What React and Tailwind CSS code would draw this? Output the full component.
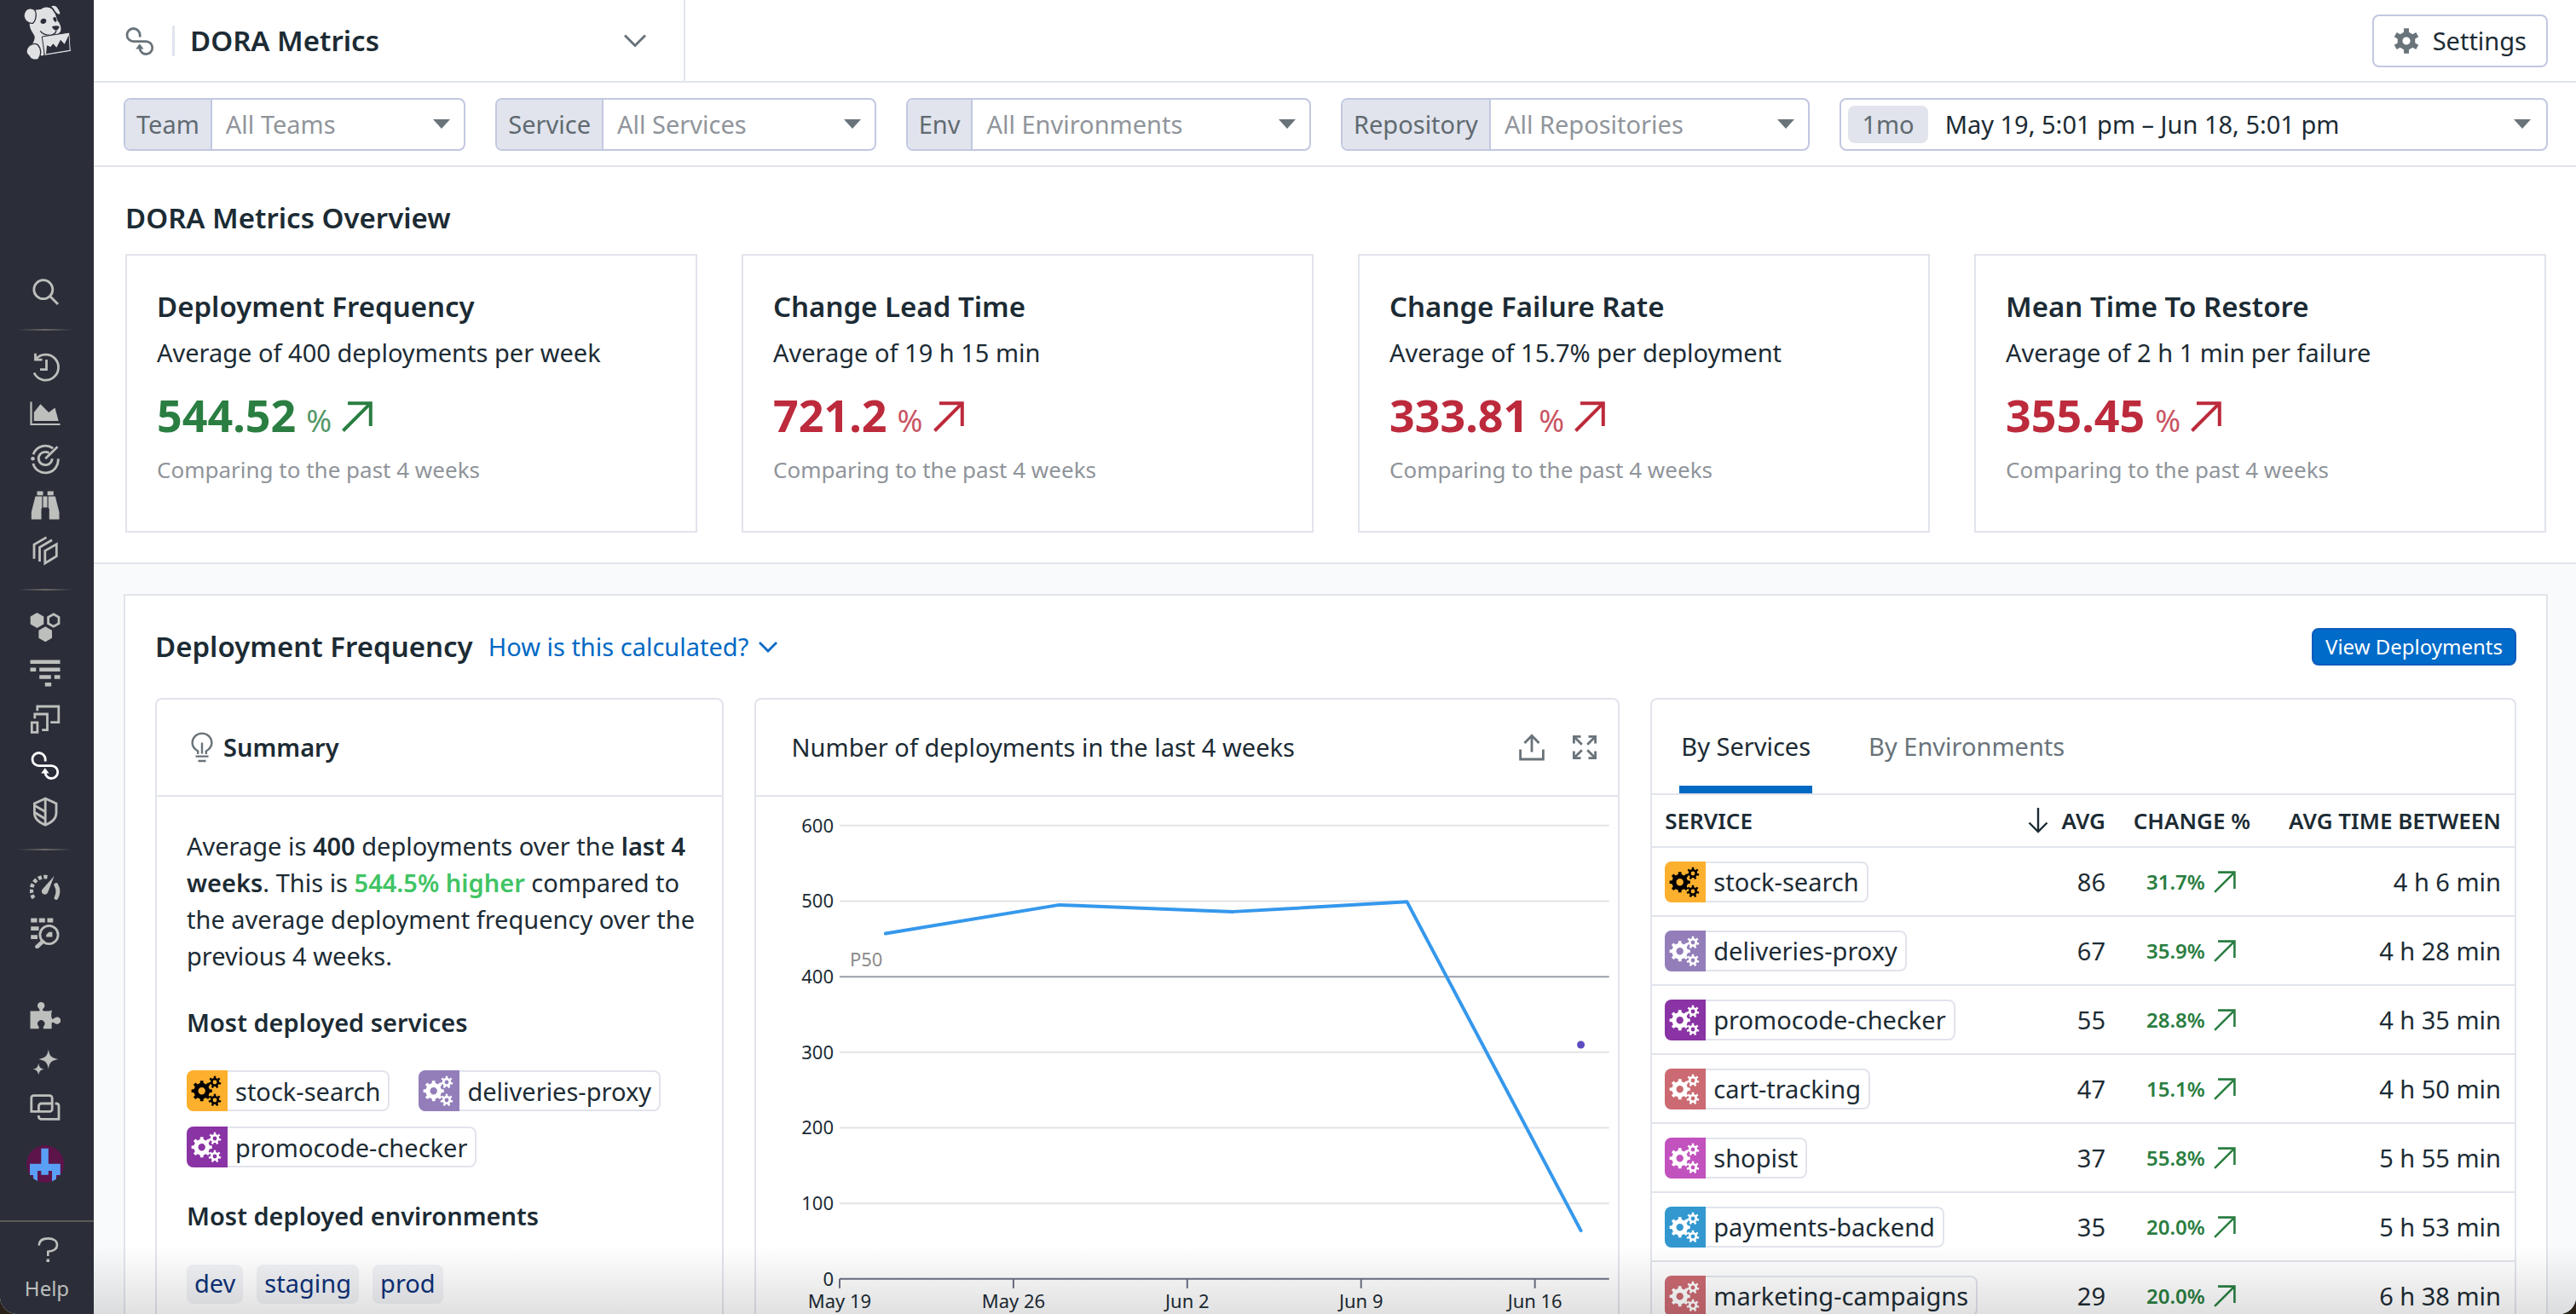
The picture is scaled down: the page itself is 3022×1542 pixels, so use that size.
import { useState } from "react";

const filters = [
  { id: "team", label: "Team", placeholder: "All Teams" },
  { id: "service", label: "Service", placeholder: "All Services" },
  { id: "env", label: "Env", placeholder: "All Environments" },
  { id: "repository", label: "Repository", placeholder: "All Repositories" },
];

const overview = [
  {
    title: "Deployment Frequency",
    subtitle: "Average of 400 deployments per week",
    value: "544.52",
    color: "text-[#2a7e41]",
  },
  {
    title: "Change Lead Time",
    subtitle: "Average of 19 h 15 min",
    value: "721.2",
    color: "text-[#bc2a3c]",
  },
  {
    title: "Change Failure Rate",
    subtitle: "Average of 15.7% per deployment",
    value: "333.81",
    color: "text-[#bc2a3c]",
  },
  {
    title: "Mean Time To Restore",
    subtitle: "Average of 2 h 1 min per failure",
    value: "355.45",
    color: "text-[#bc2a3c]",
  },
];

const services = [
  { name: "stock-search", tone: "bg-[#fdb02d] text-black", avg: 86, change: "31.7%", between: "4 h 6 min" },
  { name: "deliveries-proxy", tone: "bg-[#937eba] text-white", avg: 67, change: "35.9%", between: "4 h 28 min" },
  { name: "promocode-checker", tone: "bg-[#8a33a4] text-white", avg: 55, change: "28.8%", between: "4 h 35 min" },
  { name: "cart-tracking", tone: "bg-[#cb6a72] text-white", avg: 47, change: "15.1%", between: "4 h 50 min" },
  { name: "shopist", tone: "bg-[#c152be] text-white", avg: 37, change: "55.8%", between: "5 h 55 min" },
  { name: "payments-backend", tone: "bg-[#3398cf] text-white", avg: 35, change: "20.0%", between: "5 h 53 min" },
  { name: "marketing-campaigns", tone: "bg-[#cb6a72] text-white", avg: 29, change: "20.0%", between: "6 h 38 min" },
];

// Outline of a gear with its hole, to be filled with the evenodd rule
const gearPath = (cx, cy, body, outer, hole, teeth) => {
  const step = (Math.PI * 2) / teeth;
  const point = (r, a) =>
    `${(cx + r * Math.sin(a)).toFixed(2)} ${(cy - r * Math.cos(a)).toFixed(2)}`;
  let d = "";
  for (let i = 0; i < teeth; i++) {
    const a = i * step;
    d += `${i ? "L" : "M"}${point(body, a - step * 0.27)}L${point(outer, a - step * 0.19)}`;
    d += `L${point(outer, a + step * 0.19)}L${point(body, a + step * 0.27)}`;
  }
  return `${d}ZM${cx - hole} ${cy}a${hole} ${hole} 0 1 0 ${hole * 2} 0a${hole} ${hole} 0 1 0 ${-hole * 2} 0Z`;
};

const GearsIcon = () => (
  <svg viewBox="0 0 48 48" className="size-12" fill="currentColor" fillRule="evenodd">
    <path d={gearPath(17.7, 24.3, 9.4, 12.2, 4.2, 8)} />
    <path d={gearPath(33, 14, 5.2, 7.4, 2.4, 7)} />
    <path d={gearPath(33, 35, 5.2, 7.4, 2.4, 7)} />
  </svg>
);

const LoopIcon = () => (
  <>
    <path d="M18.2 13.5V11A7.6 7.6 0 1 0 10.8 18.7H25.5A7.4 7.4 0 1 1 18 27" />
    <path d="M17.8 21.2 22.6 27.6H13.2Z" fill="currentColor" stroke="none" />
  </>
);

const HEX = "l7.8 4.5v9l-7.8 4.5-7.8-4.5v-9z";

const icons = {
  search: (
    <>
      <circle cx="15.8" cy="15.7" r="11" />
      <path d="m24 24 9 9" />
    </>
  ),
  history: (
    <>
      <path d="M5 24.5A15 15 0 1 0 7 8.5" />
      <path d="M6.5 1.8V9.2H14.5M19.5 9V20.7H12" />
    </>
  ),
  dashboards: (
    <>
      <path d="M1.5 4.5V31H35.5" strokeWidth="2.2" />
      <path d="M4.8 27V17L12.5 7.2 22.2 17 29.5 11.5 33.7 27Z" fill="currentColor" stroke="none" />
    </>
  ),
  monitors: (
    <>
      <path d="M4 12.2A15 15 0 0 1 27.2 5.2M3.8 22.8A15 15 0 0 0 33.2 17.3" />
      <path d="M22.5 10.6A8 7.6 0 1 0 26.2 17.3M18.2 17.3 32.5 3.3" />
      <circle cx="3.5" cy="17.3" r="2.3" fill="currentColor" stroke="none" />
    </>
  ),
  watchdog: (
    <path
      fill="currentColor"
      stroke="none"
      d="M8.5 1.5H15.5V6.2H8.5ZM20.7 1.5H27.8V6.2H20.7ZM6.5 7.5H14.3V21L13.5 22V34.5H1.8V26ZM21.7 7.5H29.8L34.5 26V34.5H22.8V22L21.7 21ZM15.5 7.5H20.5V20.5H15.5Z"
    />
  ),
  catalog: (
    <>
      <path d="M17.8 17.4 31.3 9.6V23.8L17.8 32Z" />
      <path d="M11.5 30V13.4L26 4.8M5 26.7V10L19.5 1.6" />
    </>
  ),
  infrastructure: (
    <>
      <path d={`M8.5 1${HEX}M18.2 17.3${HEX}`} fill="currentColor" stroke="none" />
      <path d="M27.8 2.8l6.2 3.6v7.2l-6.2 3.6-6.2-3.6v-7.2z" />
    </>
  ),
  logs: (
    <path d="M.5 4.8H35.5M.5 13.8H7.2M11.2 13.8H35.5M11.2 22.5H24.8M28.8 22.5H35.5M17.8 31.2H25.2" strokeWidth="4.6" />
  ),
  rum: (
    <path d="M2.3 21.8H8.9V33.3H2.3ZM5.8 17.3V12H20.5V30.7H14.2M8.8 8.3V3H33.8V21.7H24.2" />
  ),
  delivery: <LoopIcon />,
  security: (
    <>
      <path d="M18.2 3 31 9V20C31 26.5 25 31.5 18.2 34.2 11.5 31.5 5.4 26.5 5.4 20V9ZM18.2 3V34" />
      <path d="M6 11.5 18 18.5M6 19.5 18 27" />
    </>
  ),
  metrics: (
    <>
      <path d="M4.5 31A16 16 0 0 1 20.5 6.3" strokeWidth="4.6" strokeDasharray="4.2 2.4" />
      <path d="M28.6 5 21.4 23.6A3.8 3.8 0 1 1 14.8 20.4Z" fill="currentColor" stroke="none" />
      <path d="M30.8 15.5C33.4 20 33.6 25.5 31 30.5" strokeWidth="4.8" strokeLinecap="round" />
    </>
  ),
  logsearch: (
    <>
      <path d="M1.2 3H8.5M10.8 3H17.8M20.5 3H27.3M1.2 12.7H10.5M1.2 22.7H9" strokeWidth="4.8" />
      <circle cx="22.5" cy="20" r="10.6" />
      <path d="M15 28 8.5 34" strokeWidth="4.6" strokeLinecap="round" />
      <path d="M19.2 22.4V20L22.5 16.8H26.4V22.4Z" fill="currentColor" stroke="none" />
    </>
  ),
  integrations: (
    <path
      fill="currentColor"
      stroke="none"
      d="M.5 12.5H9.5C12 12.5 12 10.8 10.6 9.4A4.2 4.2 0 1 1 15.8 9.4C14.4 10.8 14.6 12.5 17 12.5 20 12.8 23 12.4 26 11.4 25 14.5 25 18 25.6 20.6 26 22.4 27.6 22 28.8 20.8A4.2 4.2 0 1 1 28.8 26.4C27.4 25.2 26 25.6 25.6 27V33.3H16.2C15.4 31.8 15.6 31 16.6 30A4.2 4.2 0 1 0 9.9 30C10.8 31 11 31.8 10.4 33.3H.5Z"
    />
  ),
  bits: (
    <path
      fill="currentColor"
      stroke="none"
      d="M21.8 3.6C23 11 25 13.4 33.2 15 25 16.6 23 19 21.8 26.4 20.6 19 18.6 16.6 10.4 15 18.6 13.4 20.6 11 21.8 3.6ZM10.2 19.8C11 24.4 12.4 26 17.2 26.8 12.4 27.6 11 29.2 10.2 33.6 9.4 29.2 8 27.6 3.4 26.8 8 26 9.4 24.4 10.2 19.8Z"
    />
  ),
  support: (
    <>
      <path d="M1.8 22.4V6.4A3 3 0 0 1 4.8 3.6H23.2A3 3 0 0 1 26.2 6.6V19.4A3 3 0 0 1 23.2 22.4Z" />
      <path d="M25.5 13H13.4A3 3 0 0 0 10.4 16V21.5M29.6 13H31.4A3 3 0 0 1 34 15.8V31.4H13.4A3 3 0 0 1 10.4 28.4V27" />
    </>
  ),
  help: (
    <>
      <path d="M8.8 13.6C9 8 13.5 5.4 19.5 5.4 26 5.4 30 8.4 30 13 30 18.6 25 20.2 19.3 20.8V26" strokeWidth="2.6" />
      <path d="M17.5 29.4H21V33H17.5Z" fill="currentColor" stroke="none" />
    </>
  ),
};

const SideIcon = ({ name }) => (
  <svg viewBox="0 0 36 36" className="size-9" fill="none" stroke="currentColor" strokeWidth="2.8">
    {icons[name]}
  </svg>
);

const NavItem = ({ name, active }) => (
  <a
    href="#"
    aria-label={name}
    className={
      active
        ? "flex h-[54px] items-center justify-center text-white"
        : "flex h-[54px] items-center justify-center text-[#bdbfbc]"
    }
  >
    <SideIcon name={name} />
  </a>
);

const NavDivider = () => (
  <div className="flex h-[35px] items-center justify-center">
    <div className="h-0.5 w-16 bg-linear-to-r from-transparent via-[#6a6766] to-transparent" />
  </div>
);

const Logo = () => (
  <svg viewBox="50 15 171 195" className="h-[65px] w-[57px]" fill="#dfe1e3">
    <path d="M76 32C92 40 98 32 113 33 122 24 138 22 152 32L163 48 172 74C182 84 186 100 182 110 176 122 160 122 150 130L120 132 124 194C104 200 84 192 76 170 80 156 92 146 91 128 84 112 72 104 73 78Z" />
    <path d="M147 22C158 14 170 20 176 32 182 42 185 50 178 52 168 52 160 40 156 32Z" stroke="#2b2e39" strokeWidth="4" />
    <path d="M60 36C66 28 84 26 92 36 100 50 94 76 84 82 70 84 56 74 53 58 52 48 55 42 60 36Z" stroke="#2b2e39" strokeWidth="4" />
    <path d="M66 168C72 156 90 150 102 158 114 170 116 194 104 208 92 214 76 210 70 196 60 190 60 178 66 168Z" stroke="#2b2e39" strokeWidth="4" />
    <path d="M115 68C122 62 132 66 132 72 132 80 126 86 118 83 110 82 110 74 115 68Z" fill="#2b2e39" />
    <path d="M158 61C164 58 168 64 168 70 170 78 164 80 160 74 156 70 154 66 158 61Z" fill="#2b2e39" />
    <path d="M152 94C160 90 172 90 178 94 176 102 172 106 166 107 160 106 154 102 152 94Z" fill="#2b2e39" />
    <path d="M111 109C118 120 134 124 148 124 156 123 164 118 167 108" fill="none" stroke="#2b2e39" strokeWidth="4" />
    <path d="M117 129 214 114 219 181 126 196Z" stroke="#2b2e39" strokeWidth="3" />
    <path d="M131 190 134 160 147 165 156 154 168 167 182 140 196 155 211 124 214 176Z" fill="#2b2e39" />
  </svg>
);

const Avatar = () => (
  <svg viewBox="0 0 44 44" className="size-11">
    <clipPath id="avatar">
      <circle cx="22" cy="22" r="22" />
    </clipPath>
    <g clipPath="url(#avatar)">
      <path d="M0 0H44V44H0Z" fill="#5c144b" />
      <path d="M17.3 3.8H25.8V21.8H39.8V35H35V44H30V30H25.8V34.8H17.3V30H13V44H8V35H4V21.8H17.3Z" fill="#5a9ff6" />
    </g>
  </svg>
);

const Sidebar = () => (
  <nav className="flex w-[110px] shrink-0 flex-col bg-[#2b2e39] pr-1">
    <a href="#" aria-label="Home" className="flex justify-center pt-[5px] pl-1">
      <Logo />
    </a>
    <div className="mt-auto pr-px pb-7">
      <NavItem name="search" />
      <NavDivider />
      <NavItem name="history" />
      <NavItem name="dashboards" />
      <NavItem name="monitors" />
      <NavItem name="watchdog" />
      <NavItem name="catalog" />
      <NavDivider />
      <NavItem name="infrastructure" />
      <NavItem name="logs" />
      <NavItem name="rum" />
      <NavItem name="delivery" active />
      <NavItem name="security" />
      <NavDivider />
      <NavItem name="metrics" />
      <NavItem name="logsearch" />
      <div className="h-[43px]" />
      <NavItem name="integrations" />
      <NavItem name="bits" />
      <NavItem name="support" />
      <a href="#" aria-label="Account" className="flex h-[77px] items-center justify-center">
        <Avatar />
      </a>
    </div>
    <a
      href="#"
      className="-mr-1 flex h-[110px] flex-col items-center border-t-2 border-[#5b5a5b] pt-3.5 text-2xl text-[#bdbfbc]"
    >
      <SideIcon name="help" />
      <span className="mt-3">Help</span>
    </a>
  </nav>
);

const Caret = () => (
  <svg viewBox="0 0 20 11" className="h-[11px] w-5 shrink-0" fill="#69737a">
    <path d="M0 0H20L10 11Z" />
  </svg>
);

const Filter = ({ id, label, placeholder }) => (
  <div className="flex h-[62px] min-w-0 overflow-hidden rounded-lg border-2 border-[#c1c8e0] bg-white">
    <label
      htmlFor={id}
      className="flex items-center border-r-2 border-[#c1c8e0] bg-[#e1e4ed] px-[13px] text-[29px] text-[#606a70]"
    >
      {label}
    </label>
    <div className="relative flex min-w-0 flex-1 items-center">
      <select
        id={id}
        className="h-full w-full appearance-none bg-transparent pr-12 pl-4 text-[29px] text-[#90959b] outline-none"
      >
        <option>{placeholder}</option>
      </select>
      <div className="pointer-events-none absolute right-4">
        <Caret />
      </div>
    </div>
  </div>
);

const UpArrow = ({ className, strokeWidth }) => (
  <svg viewBox="0 0 36 36" className={className} fill="none" stroke="currentColor" strokeWidth={strokeWidth}>
    <path d="M7 2.2H33.8V29M33.8 2.2 1.5 34.5" />
  </svg>
);

const OverviewCard = ({ title, subtitle, value, color }) => (
  <div className="border-2 border-[#e1e4ec] bg-white px-[35px] pt-[38px] pb-[52px]">
    <h3 className="text-[33px] leading-[44px] font-semibold">{title}</h3>
    <p className="mt-2.5 text-[29px] leading-[43px]">{subtitle}</p>
    <div className={`mt-5 flex h-16 items-baseline gap-3 ${color}`}>
      <span className="text-[52px] leading-[64px] font-bold">{value}</span>
      <span className="text-4xl opacity-80">%</span>
      <UpArrow className="size-9" strokeWidth="4" />
    </div>
    <p className="mt-3 text-[26px] leading-10 text-[#8f949a]">Comparing to the past 4 weeks</p>
  </div>
);

const ServiceChip = ({ name, tone }) => (
  <a href="#" className="inline-flex h-12 items-center rounded-lg border-2 border-[#e1e4ec] bg-white">
    <span className={`-my-0.5 -ml-0.5 size-12 shrink-0 rounded-l-lg ${tone}`}>
      <GearsIcon />
    </span>
    <span className="px-[9px] text-[29px] leading-[43px]">{name}</span>
  </a>
);

const Summary = () => (
  <section className="rounded-t-lg border-2 border-[#e1e4ec]">
    <div className="flex h-[114px] items-center gap-3 border-b-2 border-[#e1e4ec] pl-10">
      <svg viewBox="0 0 26 36" className="h-9 w-[26px]" fill="none" stroke="#69737a" strokeWidth="2.4">
        <path d="M8.2 26V22.5C4 20 1.6 17 1.6 12.8 1.6 6.4 6.6 1.6 13 1.6S24.4 6.4 24.4 12.8C24.4 17 22 20 17.8 22.5V26" />
        <path d="M13 12.5V25.5M5.5 28.6H20.5M8.5 34H17.5" />
      </svg>
      <h3 className="text-[29px] font-semibold">Summary</h3>
    </div>
    <div className="pt-9 pr-6 pl-[35px] text-[29px] leading-[43px]">
      <p>
        Average is <b className="font-semibold">400</b> deployments over the{" "}
        <b className="font-semibold">last 4 weeks</b>. This is{" "}
        <b className="font-semibold text-[#41c464]">544.5% higher</b> compared to the average
        deployment frequency over the previous 4 weeks.
      </p>
      <h4 className="mt-[35px] font-semibold">Most deployed services</h4>
      <div className="mt-[35px] flex flex-wrap gap-x-[34px] gap-y-[18px]">
        {services.slice(0, 3).map((s) => (
          <ServiceChip key={s.name} name={s.name} tone={s.tone} />
        ))}
      </div>
      <h4 className="mt-[35px] font-semibold">Most deployed environments</h4>
      <div className="mt-9 flex gap-4 pb-10">
        {["dev", "staging", "prod"].map((env) => (
          <a key={env} href="#" className="rounded-lg bg-[#f1f2f5] px-[9px] pb-[3px] text-[#0d3178]">
            {env}
          </a>
        ))}
      </div>
    </div>
  </section>
);

const yTicks = [600, 500, 400, 300, 200, 100, 0];
const xTicks = ["May 19", "May 26", "Jun 2", "Jun 9", "Jun 16"];
const yFor = (v) => 566 - v * 0.887;
const xFor = (day) => 98 + day * 29.14;
const points = [
  [1.85, 457],
  [8.85, 495],
  [15.85, 486],
  [22.85, 499],
  [29.85, 64],
];

const DeploymentsChart = () => (
  <svg viewBox="0 0 1012 640" className="w-full" fontSize="22" fill="#1c2b34">
    {yTicks.map((v) => (
      <g key={v}>
        {v > 0 && (
          <path d={`M98 ${yFor(v)}H1001`} stroke={v === 400 ? "#9a9eaa" : "#e4e4e7"} strokeWidth="2" />
        )}
        <text x="91" y={yFor(v) + 8} textAnchor="end">
          {v}
        </text>
      </g>
    ))}
    <path d={`M98 ${yFor(0)}H1001`} stroke="#6d7086" strokeWidth="2" />
    {xTicks.map((label, i) => (
      <g key={label}>
        <path d={`M${xFor(i * 7)} ${yFor(0)}v11`} stroke="#6d7086" strokeWidth="2" />
        <text x={xFor(i * 7)} y="600" textAnchor="middle">
          {label}
        </text>
      </g>
    ))}
    <text x="110" y="199" fill="#8b8b8b">
      P50
    </text>
    <polyline
      points={points.map(([day, v]) => `${xFor(day)},${yFor(v)}`).join(" ")}
      fill="none"
      stroke="#3598ec"
      strokeWidth="4"
      strokeLinecap="round"
      strokeLinejoin="round"
    />
    <circle cx={xFor(29.85)} cy={yFor(310)} r="4.5" fill="#5d4cc2" />
  </svg>
);

const ChartCard = () => (
  <section className="rounded-t-lg border-2 border-[#e1e4ec]">
    <div className="flex h-[114px] items-center border-b-2 border-[#e1e4ec] pr-6 pl-[42px] text-[#69737a]">
      <h3 className="flex-1 text-[29px] text-[#1c2b34]">Number of deployments in the last 4 weeks</h3>
      <button type="button" aria-label="Export">
        <svg viewBox="0 0 30 32" className="h-8 w-[30px]" fill="none" stroke="currentColor" strokeWidth="2.8">
          <path d="M1.6 18.5V30H28.4V18.5M15 21.5V2M6.5 11 15 2.2 23.5 11" />
        </svg>
      </button>
      <button type="button" aria-label="Full screen" className="ml-8">
        <svg viewBox="0 0 30 30" className="size-[30px]" fill="none" stroke="currentColor" strokeWidth="2.8">
          <path d="M2.4 10.5V2.4H10.5M19.5 2.4H27.6V10.5M27.6 19.5V27.6H19.5M10.5 27.6H2.4V19.5" />
          <path d="M3 3 11.8 11.8M27 3 18.2 11.8M27 27 18.2 18.2M3 27 11.8 18.2" />
        </svg>
      </button>
    </div>
    <DeploymentsChart />
  </section>
);

const tabs = ["By Services", "By Environments"];

const BreakdownCard = () => {
  const [tab, setTab] = useState(tabs[0]);

  return (
    <section className="rounded-t-lg border-2 border-[#e1e4ec]">
      <div role="tablist" className="flex h-[112px] gap-16 border-b-2 border-[#e1e4ec] pl-8">
        {tabs.map((name) => (
          <button
            key={name}
            type="button"
            role="tab"
            aria-selected={tab === name}
            onClick={() => setTab(name)}
            className={
              tab === name
                ? "border-y-9 border-t-transparent border-b-[#0069c4] px-0.5 text-[29px]"
                : "border-y-9 border-transparent px-0.5 text-[29px] text-[#69737a]"
            }
          >
            {name}
          </button>
        ))}
      </div>
      <table className="w-full table-fixed text-[29px]">
        <thead>
          <tr className="h-[61px] border-b-2 border-[#e1e4ec] text-[26px]">
            <th className="px-[15px] text-left font-semibold">SERVICE</th>
            <th className="w-[150px] px-4 font-semibold">
              <span className="flex items-center justify-end gap-4">
                <svg viewBox="0 0 24 30" className="h-[30px] w-6" fill="none" stroke="currentColor" strokeWidth="2.4">
                  <path d="M12 0V28M1.5 17.5 12 28 22.5 17.5" />
                </svg>
                AVG
              </span>
            </th>
            <th className="w-[170px] px-4 text-right font-semibold whitespace-nowrap">CHANGE %</th>
            <th className="w-[294px] px-4 text-right font-semibold whitespace-nowrap">AVG TIME BETWEEN</th>
          </tr>
        </thead>
        <tbody>
          {services.map((s) => (
            <tr key={s.name} className="h-[81px] border-b-2 border-[#e1e4ec]">
              <td className="px-[15px]">
                <div className="flex">
                  <ServiceChip name={s.name} tone={s.tone} />
                </div>
              </td>
              <td className="px-4 text-right">{s.avg}</td>
              <td className="pl-8 text-[#2a7e41]">
                <span className="flex items-center gap-2.5 text-2xl font-semibold">
                  {s.change}
                  <UpArrow className="size-[26px]" strokeWidth="3.6" />
                </span>
              </td>
              <td className="px-4 text-right">{s.between}</td>
            </tr>
          ))}
        </tbody>
      </table>
    </section>
  );
};

const Header = () => (
  <header className="flex h-[97px] shrink-0 items-center border-b-2 border-[#e1e4ec] pr-[33px]">
    <button type="button" className="flex h-full w-[694px] items-center border-r-2 border-[#e1e4ec] pr-11 pl-9">
      <svg viewBox="0 0 36 36" className="size-9 text-[#69737a]" fill="none" stroke="currentColor" strokeWidth="2.8">
        <LoopIcon />
      </svg>
      <span className="mr-[18px] ml-5 h-9 w-[3px] bg-[#e1e4ee]" />
      <span className="flex-1 text-left text-[33px] font-semibold">DORA Metrics</span>
      <svg viewBox="0 0 26 16" className="h-4 w-[26px]" fill="none" stroke="#69737a" strokeWidth="3">
        <path d="M1 1.5 13 13.5 25 1.5" />
      </svg>
    </button>
    <button
      type="button"
      className="ml-auto flex h-[62px] items-center gap-4 rounded-lg border-2 border-[#c1c8e0] px-[23px] text-[29px]"
    >
      <svg viewBox="0 0 30 30" className="size-[30px]" fill="#69737a" fillRule="evenodd">
        <path d={gearPath(15, 15, 10.6, 15, 4.6, 6)} />
      </svg>
      Settings
    </button>
  </header>
);

const App = () => {
  return (
    <div className="h-screen overflow-hidden bg-[#2a2118] font-['Noto_Sans',sans-serif] text-[#1c2b34]">
      <div className="relative flex h-full overflow-hidden rounded-b-[20px] bg-white">
        <Sidebar />
        <div className="flex min-w-0 flex-1 flex-col">
          <Header />
          <div className="grid h-[99px] shrink-0 grid-cols-[401fr_446fr_475fr_550fr_830fr] items-center gap-[35px] border-b-2 border-[#e1e4ec] pr-[33px] pl-[35px]">
            {filters.map((f) => (
              <Filter key={f.id} {...f} />
            ))}
            <button
              type="button"
              className="flex h-[62px] items-center rounded-lg border-2 border-[#c1c8e0] pr-[18px] pl-2 text-[29px]"
            >
              <span className="rounded-lg bg-[#e1e4ed] px-4 leading-[44px] text-[#606a70]">1mo</span>
              <span className="flex-1 pl-5 text-left">May 19, 5:01 pm – Jun 18, 5:01 pm</span>
              <Caret />
            </button>
          </div>
          <main className="min-h-0 flex-1 overflow-hidden bg-[#f9fafc]">
            <section className="border-b-2 border-[#e1e4ec] bg-white pt-[38px] pr-[35px] pb-[35px] pl-[37px]">
              <h2 className="text-[33px] leading-[44px] font-semibold">DORA Metrics Overview</h2>
              <div className="mt-5 grid grid-cols-4 gap-[52px]">
                {overview.map((card) => (
                  <OverviewCard key={card.title} {...card} />
                ))}
              </div>
            </section>
            <div className="pt-[35px] pr-[33px] pl-[35px]">
              <section className="border-2 border-[#e1e4ec] bg-white px-[35px] pt-9">
                <div className="flex h-12 items-center">
                  <h2 className="text-[33px] font-semibold">Deployment Frequency</h2>
                  <button type="button" className="ml-[18px] flex items-center gap-3 text-[29px] text-[#0069c4]">
                    How is this calculated?
                    <svg viewBox="0 0 22 14" className="h-3.5 w-[22px]" fill="none" stroke="currentColor" strokeWidth="2.8">
                      <path d="M1 2 11 12 21 2" />
                    </svg>
                  </button>
                  <a
                    href="#"
                    className="ml-auto flex h-11 items-center rounded-lg border-2 border-[#0d5bbd] bg-[#006bc8] px-3.5 text-2xl text-white"
                  >
                    View Deployments
                  </a>
                </div>
                <div className="mt-9 grid grid-cols-[21fr_32fr_32fr] gap-9">
                  <Summary />
                  <ChartCard />
                  <BreakdownCard />
                </div>
              </section>
            </div>
          </main>
        </div>
        <div className="pointer-events-none absolute right-0 bottom-0 left-[110px] h-20 bg-linear-to-t from-black/12 to-transparent" />
      </div>
    </div>
  );
};

export default App;
